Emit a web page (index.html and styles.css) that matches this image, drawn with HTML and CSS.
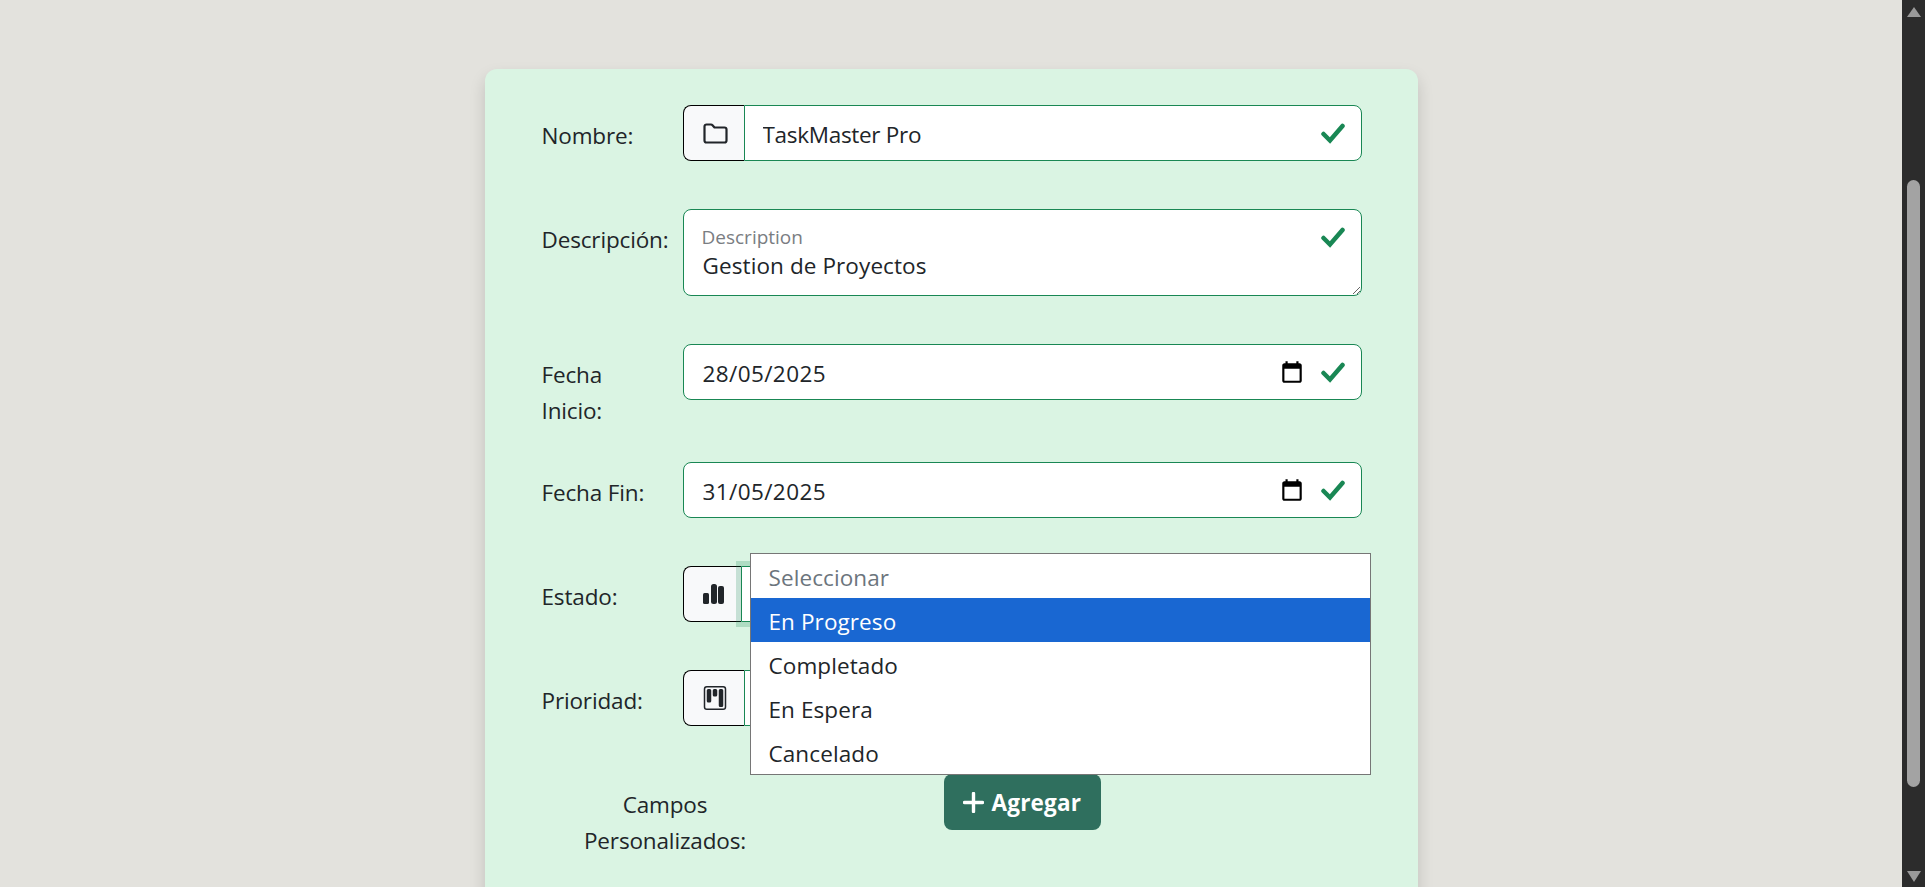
FILE: index.html
```html
<!DOCTYPE html>
<html lang="es">
<head>
<meta charset="utf-8">
<title>Proyecto</title>
<link rel="stylesheet" href="styles.css">
</head>
<body>
<div class="page">
  <main class="content">
    <form class="card">
      <div class="row">
        <label class="lbl">Nombre:</label>
        <div class="group">
          <span class="addon"><svg class="folder" viewBox="0 0 25 21"><path d="M1.500 6V3.500a2 2 0 0 1 2-2h4.500a2 2 0 0 1 1.500.7L11.500 4.500H21.500a2 2 0 0 1 2 2V17.500a2 2 0 0 1-2 2H3.500a2 2 0 0 1-2-2Z"/></svg></span>
          <input class="field field-join" type="text" value="TaskMaster Pro">
          <svg class="check" viewBox="0 0 24 22"><path d="M2.500 12 9 18.500 21.500 4"/></svg>
        </div>
      </div>
      <div class="row">
        <label class="lbl">Descripción:</label>
        <div class="group group-area">
          <textarea class="field area">Gestion de Proyectos</textarea>
          <span class="float">Description</span>
          <svg class="check" viewBox="0 0 24 22"><path d="M2.500 12 9 18.500 21.500 4"/></svg>
        </div>
      </div>
      <div class="row row-tight">
        <label class="lbl">Fecha<br>Inicio:</label>
        <div class="group">
          <input class="field field-date" type="text" value="28/05/2025">
          <svg class="cal" viewBox="0 0 24 24"><path d="M19 4h-1V2h-2v2H8V2H6v2H5c-1.100 0-2 .9-2 2v14c0 1.100.9 2 2 2h14c1.100 0 2-.9 2-2V6c0-1.100-.9-2-2-2zm0 16H5V9h14v11z"/></svg>
          <svg class="check" viewBox="0 0 24 22"><path d="M2.500 12 9 18.500 21.500 4"/></svg>
        </div>
      </div>
      <div class="row">
        <label class="lbl">Fecha Fin:</label>
        <div class="group">
          <input class="field field-date" type="text" value="31/05/2025">
          <svg class="cal" viewBox="0 0 24 24"><path d="M19 4h-1V2h-2v2H8V2H6v2H5c-1.100 0-2 .9-2 2v14c0 1.100.9 2 2 2h14c1.100 0 2-.9 2-2V6c0-1.100-.9-2-2-2zm0 16H5V9h14v11z"/></svg>
          <svg class="check" viewBox="0 0 24 22"><path d="M2.500 12 9 18.500 21.500 4"/></svg>
        </div>
      </div>
      <div class="row">
        <label class="lbl">Estado:</label>
        <div class="group">
          <span class="addon addon-narrow"><svg class="bars" viewBox="0 0 21 20"><rect x="0" y="9" width="6" height="11" rx="1.500"/><rect x="8" y="0" width="6" height="20" rx="2.500"/><rect x="15" y="2" width="6" height="18" rx="2"/></svg></span>
          <div class="field field-join select-open"></div>
          <ul class="popup">
            <li class="opt opt-muted">Seleccionar</li>
            <li class="opt opt-active">En Progreso</li>
            <li class="opt">Completado</li>
            <li class="opt">En Espera</li>
            <li class="opt">Cancelado</li>
          </ul>
        </div>
      </div>
      <div class="row">
        <label class="lbl">Prioridad:</label>
        <div class="group">
          <span class="addon"><svg class="ico" viewBox="0 0 16 16"><path d="M13.500 1a1 1 0 0 1 1 1v12a1 1 0 0 1-1 1h-11a1 1 0 0 1-1-1V2a1 1 0 0 1 1-1h11zm-11-1a2 2 0 0 0-2 2v12a2 2 0 0 0 2 2h11a2 2 0 0 0 2-2V2a2 2 0 0 0-2-2h-11z"/><path d="M6.500 3a1 1 0 0 1 1-1h1a1 1 0 0 1 1 1v3a1 1 0 0 1-1 1h-1a1 1 0 0 1-1-1V3zm-4 0a1 1 0 0 1 1-1h1a1 1 0 0 1 1 1v7a1 1 0 0 1-1 1h-1a1 1 0 0 1-1-1V3zm8 0a1 1 0 0 1 1-1h1a1 1 0 0 1 1 1v10a1 1 0 0 1-1 1h-1a1 1 0 0 1-1-1V3z"/></svg></span>
          <div class="field field-join"></div>
        </div>
      </div>
      <div class="row-custom">
        <label class="lbl lbl-center">Campos Personalizados:</label>
        <button class="add" type="button"><svg class="plus" viewBox="0 0 21 21"><path d="M10.500 1.500v18M1.500 10.500h18"/></svg>Agregar</button>
      </div>
    </form>
  </main>
  <aside class="scrollbar">
    <span class="arrow arrow-up"></span>
    <div class="track"><div class="thumb"></div></div>
    <span class="arrow arrow-down"></span>
  </aside>
</div>
</body>
</html>
```

FILE: styles.css
```css
* { box-sizing: border-box; }
html, body { margin: 0; height: 100%; overflow: hidden; }
body {
  font-family: "Open Sans", "Noto Sans", "Liberation Sans", sans-serif;
  font-size: 22.500px;
  color: #212529;
  background: #e3e2dd;
}
.page { display: flex; height: 887px; }
.content { flex: 1; min-width: 0; overflow: hidden; display: flex; justify-content: center; padding-top: 69px; }
.card {
  width: 933px;
  height: 1100px;
  flex: none;
  background: #daf4e3;
  border-radius: 12px;
  padding: 36px 56px 0 57px;
  box-shadow: 0 8px 16px rgba(0,0,0,.15);
}
.row { display: flex; margin-bottom: 48px; }
.row-tight { margin-bottom: 33px; }
.lbl { width: 141px; flex: none; padding-top: 13px; line-height: 36px; letter-spacing: -.15px; white-space: nowrap; }
.group { position: relative; flex: 1; display: flex; min-width: 0; height: 56px; }
.group-area { height: 87px; }
.addon {
  width: 61px;
  flex: none;
  height: 56px;
  display: flex;
  align-items: center;
  padding-left: 19px;
  background: #f8f9fa;
  border: 1px solid #000;
  border-right: 0;
  border-radius: 8px 0 0 8px;
}
.addon-narrow { width: 58px; }
.ico { width: 24px; height: 24px; fill: #212529; display: block; flex: none; }
.folder { width: 25px; height: 21px; fill: none; stroke: #212529; stroke-width: 2.200; flex: none; display: block; stroke-linejoin: round; }
.bars { width: 21px; height: 20px; fill: #212529; flex: none; display: block; }
.field {
  flex: 1;
  min-width: 0;
  width: 100%;
  height: 56px;
  margin: 0;
  background: #fff;
  border: 1px solid #198754;
  border-radius: 8px;
  font: inherit;
  letter-spacing: -.3px;
  color: #212529;
  padding: 2px 60px 0 18px;
  outline: 0;
}
.field-join { border-radius: 0 8px 8px 0; }
.field-date { padding-left: 19px; letter-spacing: .4px; }
.area { height: 87px; padding: 38px 60px 0 19px; line-height: 36px; letter-spacing: .1px; resize: vertical; display: block; }
.float {
  position: absolute;
  left: 19px;
  top: 16px;
  font-size: 19px;
  line-height: 24px;
  color: #7a7d82;
}
.check {
  position: absolute;
  right: 17px;
  top: 17px;
  width: 24px;
  height: 22px;
  fill: none;
  stroke: #198754;
  stroke-width: 4.500;
  stroke-linecap: round;
  stroke-linejoin: miter;
}
.cal { position: absolute; right: 57px; top: 15px; width: 26px; height: 26px; fill: #000; }
.select-open { box-shadow: 0 0 0 5px rgba(25,135,84,.22); position: relative; }
.popup {
  position: absolute;
  left: 67px;
  top: -13px;
  width: 621px;
  margin: 0;
  padding: 0;
  list-style: none;
  background: #fff;
  border: 1px solid #767676;
  z-index: 5;
}
.opt { height: 44px; line-height: 44px; padding: 2px 0 0 18px; letter-spacing: .1px; }
.opt-muted { color: #6c757d; }
.opt-active { background: #1967d2; color: #fff; }
.row-custom { display: flex; align-items: flex-start; margin-top: 1px; }
.lbl-center { width: 247px; text-align: center; white-space: normal; padding: 13px 40px 0; }
.add {
  display: flex;
  align-items: center;
  gap: 8px;
  width: 157px;
  height: 56px;
  margin-left: 155px;
  padding: 0 0 0 19px;
  background: #2f6f5e;
  color: #fff;
  border: 0;
  border-radius: 8px;
  font: inherit;
  font-weight: 700;
  letter-spacing: .2px;
}
.plus { width: 21px; height: 21px; fill: none; stroke: #fff; stroke-width: 3.400; flex: none; stroke-linecap: round; }
.scrollbar {
  width: 23px;
  flex: none;
  background: #2c2c2c;
  display: flex;
  flex-direction: column;
  align-items: center;
  position: relative;
}
.arrow { width: 0; height: 0; flex: none; border-left: 7.500px solid transparent; border-right: 7.500px solid transparent; }
.arrow-up { margin-top: 7px; border-bottom: 10px solid #9a9a9a; }
.arrow-down { margin-bottom: 5px; border-top: 11px solid #9a9a9a; }
.track { flex: 1; width: 100%; padding-top: 163px; display: flex; justify-content: center; }
.thumb { width: 13px; height: 607px; background: #a3a3a3; border-radius: 7px; }
```
